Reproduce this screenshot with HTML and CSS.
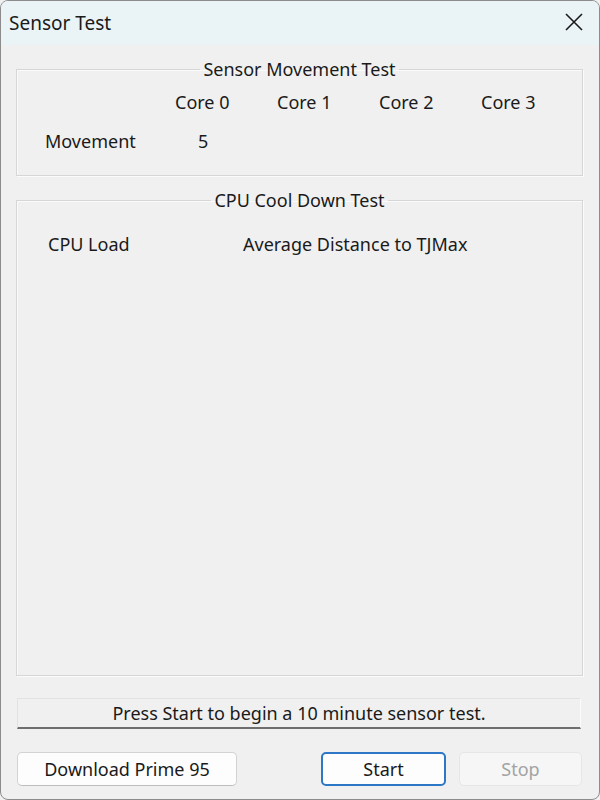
FILE: index.html
```html
<!DOCTYPE html>
<html>
<head>
<meta charset="utf-8">
<title>Sensor Test</title>
<link rel="stylesheet" href="styles.css">
</head>
<body>
<div class="window">
  <div class="titlebar">
    <span class="title">Sensor Test</span>
    <span class="close" aria-label="Close">
      <svg width="18" height="18" viewBox="0 0 18 18"><path d="M1 1 L17 17 M17 1 L1 17" stroke="#1a1a1a" stroke-width="1.6" fill="none"/></svg>
    </span>
  </div>
  <div class="content">
    <fieldset class="group group-movement">
      <legend>Sensor Movement Test</legend>
      <div class="core-grid">
        <span></span>
        <span class="hdr">Core 0</span>
        <span class="hdr">Core 1</span>
        <span class="hdr">Core 2</span>
        <span class="hdr">Core 3</span>
        <span class="rowlabel">Movement</span>
        <span class="val">5</span>
        <span></span><span></span><span></span>
      </div>
    </fieldset>
    <fieldset class="group group-cool">
      <legend>CPU Cool Down Test</legend>
      <div class="cool-head">
        <span class="cpu-load">CPU Load</span>
        <span class="avg">Average Distance to TJMax</span>
      </div>
    </fieldset>
    <div class="status">Press Start to begin a 10 minute sensor test.</div>
    <div class="buttons">
      <button class="btn btn-download">Download Prime 95</button>
      <span class="spacer"></span>
      <button class="btn btn-start">Start</button>
      <button class="btn btn-stop" disabled>Stop</button>
    </div>
  </div>
</div>
</body>
</html>
```
FILE: styles.css
```css
html, body {
  margin: 0;
  padding: 0;
  background: #f0f0f0;
}
.window {
  width: 600px;
  height: 800px;
  box-sizing: border-box;
  border: 1px solid #8c8c8c;
  border-radius: 8px;
  overflow: hidden;
  background: #f0f0f0;
  font-family: "Noto Sans", "Open Sans", sans-serif;
  font-size: 18px;
  color: #1a1a1a;
  display: flex;
  flex-direction: column;
}
.titlebar {
  height: 44px;
  flex: none;
  background: #eaf4f7;
  display: flex;
  align-items: center;
  justify-content: space-between;
  padding: 0 16px 0 8px;
}
.title {
  font-size: 19px;
  margin-top: -1px;
}
.close {
  display: flex;
  margin-top: -2px;
}
.content {
  flex: 1;
  display: flex;
  flex-direction: column;
  padding: 14px 16px 13px 15px;
}
.group {
  margin: 0;
  padding: 0;
  border: 1px solid #d6d6d6;
  box-shadow: inset 1px 1px 0 #fbfbfb, 1px 1px 0 #fbfbfb;
  min-width: 0;
}
.group legend {
  margin: 0 auto;
  padding: 0 3px;
  line-height: 20px;
}
.group-movement {
  height: 117px;
  box-sizing: border-box;
}
.core-grid {
  display: grid;
  grid-template-columns: 130px 102px 102px 102px 102px;
  grid-auto-rows: 39px;
  align-items: center;
  padding: 13px 0 0 28px;
  margin-top: -10px;
}
.val {
  padding-left: 23px;
}
.group-cool {
  margin-top: 14px;
  flex: 1;
}
.cool-head {
  display: flex;
  padding: 22px 0 0 31px;
}
.cpu-load {
  width: 195px;
}
.status {
  margin-top: 22px;
  height: 31px;
  box-sizing: border-box;
  margin-left: 1px;
  margin-right: 2px;
  border-top: 1px solid #e2e2e2;
  border-left: 1px solid #e2e2e2;
  border-right: 1px solid #fbfbfb;
  border-bottom: 2px solid #6e6e6e;
  display: flex;
  align-items: center;
  justify-content: center;
  line-height: 1;
}
.buttons {
  margin-top: 23px;
  display: flex;
  align-items: center;
}
.spacer {
  flex: 1;
}
.btn {
  font-family: inherit;
  font-size: 18px;
  height: 34px;
  border-radius: 5px;
  background: #fdfdfd;
  border: 1px solid #d3d3d3;
  border-bottom-color: #bdbdbd;
  color: #1a1a1a;
  padding: 0;
  margin: 0;
}
.btn-download {
  width: 220px;
  margin-left: 1px;
}
.btn-start {
  width: 125px;
  border: 2px solid #2c78c6;
}
.btn-stop {
  width: 123px;
  margin-left: 13px;
  margin-right: 1px;
  background: #f6f6f6;
  border-color: #e6e6e6;
  color: #a3a3a3;
}
```
